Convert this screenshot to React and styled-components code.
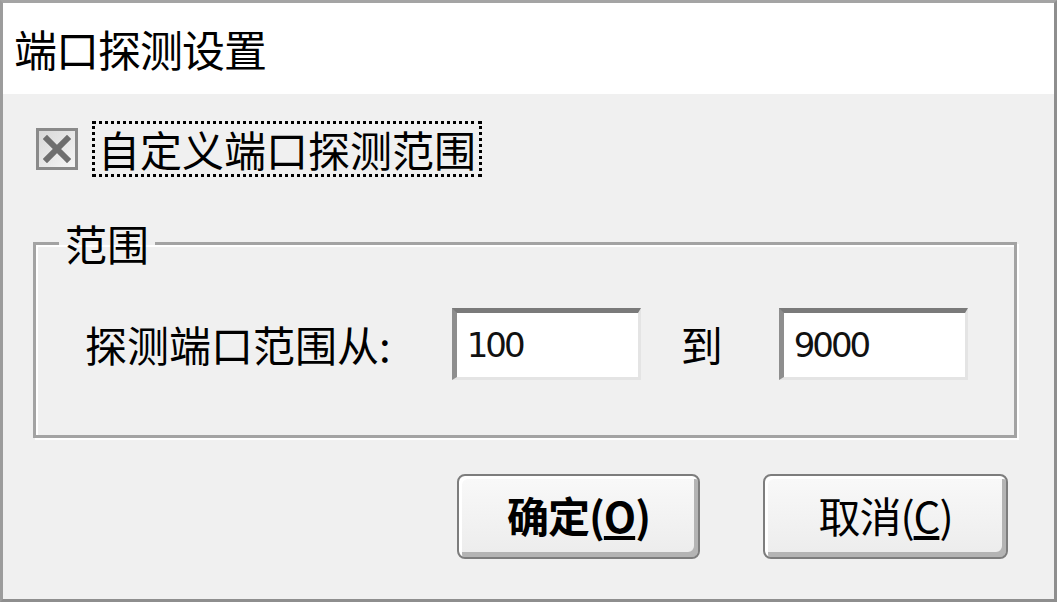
import React from 'react'
import styled, { createGlobalStyle } from 'styled-components'

const Global = createGlobalStyle`
  html, body {
    margin: 0;
    padding: 0;
    background: #ffffff;
  }
  body {
    font-family: "Noto Sans CJK SC", "Liberation Sans", sans-serif;
    color: #000;
  }
`

const Window = styled.div`
  box-sizing: border-box;
  width: 1057px;
  height: 602px;
  display: flex;
  flex-direction: column;
  border-left: 3px solid #9c9c9c;
  border-top: 3px solid #a4a4a4;
  border-right: 3px solid #8e8e8e;
  border-bottom: 3px solid #8e8e8e;
  background: #f0f0f0;
`

const TitleBar = styled.div`
  height: 91px;
  display: flex;
  align-items: center;
  padding-left: 11px;
  background: #ffffff;
  font-size: 43px;
  line-height: 1;
  letter-spacing: -1px;
`

const Body = styled.div`
  flex: 1;
  display: flex;
  flex-direction: column;
  padding: 0 0 0 30px;
`

const CheckRow = styled.div`
  display: flex;
  align-items: center;
  gap: 14px;
  margin-top: 27px;
  padding-left: 3px;
`

const CheckBox = styled.span`
  box-sizing: border-box;
  width: 42px;
  height: 42px;
  display: flex;
  align-items: center;
  justify-content: center;
  border: 3px solid #8a8a8a;
  background: linear-gradient(135deg, #d8d8d8, #f6f6f6);
`

const FocusLabel = styled.span`
  box-sizing: border-box;
  height: 56px;
  display: flex;
  align-items: center;
  padding: 0 3px;
  border: 3px dotted #000;
  font-size: 42px;
  line-height: 1;
`

const Group = styled.fieldset`
  box-sizing: border-box;
  width: 984px;
  margin: 43px 0 0 0;
  padding: 42px 0 55px 0;
  border: 3px solid #a3a3a3;
  box-shadow: inset 2px 2px 0 #ffffff, 2px 2px 0 #ffffff;
  min-width: 0;
`

const Legend = styled.legend`
  margin-left: 23px;
  padding: 0 6px;
  font-size: 42px;
  line-height: 46px;
`

const Row = styled.div`
  display: flex;
  align-items: center;
  padding-left: 49px;
`

const Label = styled.span`
  font-size: 42px;
  line-height: 1;
  margin-right: ${p => p.$gap}px;
  margin-left: ${p => p.$lead || 0}px;
`

const Field = styled.div`
  box-sizing: border-box;
  width: 189px;
  height: 72px;
  display: flex;
  align-items: center;
  padding-left: 10px;
  background: #ffffff;
  border-top: 5px solid #7a7a7a;
  border-left: 5px solid #8e8e8e;
  border-right: 3px solid #e4e4e4;
  border-bottom: 3px solid #e4e4e4;
  font-family: "DejaVu Sans", sans-serif;
  font-size: 34px;
  letter-spacing: -3px;
  color: #111;
`

const Buttons = styled.div`
  display: flex;
  justify-content: flex-end;
  gap: 63px;
  margin-top: 36px;
  padding-right: 46px;
`

const Button = styled.button`
  box-sizing: border-box;
  width: ${p => p.$w}px;
  height: 85px;
  display: flex;
  align-items: center;
  justify-content: center;
  padding: 0 0 4px 0;
  border: 2px solid #7d7d7d;
  border-radius: 8px;
  background: linear-gradient(#f9f9f9, #ececec);
  box-shadow: inset 3px 3px 0 #ffffff, inset -4px -5px 0 #b4b4b4;
  font-family: "Noto Sans CJK SC", sans-serif;
  font-size: 42px;
  font-weight: ${p => (p.$primary ? 700 : 400)};
  letter-spacing: -1px;
  color: #000;
`

function CrossMark() {
  return (
    <svg width="28" height="28" viewBox="0 0 28 28">
      <path d="M4 4 L24 24 M24 4 L4 24" stroke="#6e6e6e" strokeWidth="6" strokeLinecap="square" />
    </svg>
  )
}

export default function App() {
  return (
    <>
      <Global />
      <Window>
        <TitleBar>端口探测设置</TitleBar>
        <Body>
          <CheckRow>
            <CheckBox><CrossMark /></CheckBox>
            <FocusLabel>自定义端口探测范围</FocusLabel>
          </CheckRow>
          <Group>
            <Legend>范围</Legend>
            <Row>
              <Label $gap={61}>探测端口范围从:</Label>
              <Field>100</Field>
              <Label $lead={40} $gap={56}>到</Label>
              <Field>9000</Field>
            </Row>
          </Group>
          <Buttons>
            <Button $w={243} $primary>确定(<u>O</u>)</Button>
            <Button $w={245}>取消(<u>C</u>)</Button>
          </Buttons>
        </Body>
      </Window>
    </>
  )
}
